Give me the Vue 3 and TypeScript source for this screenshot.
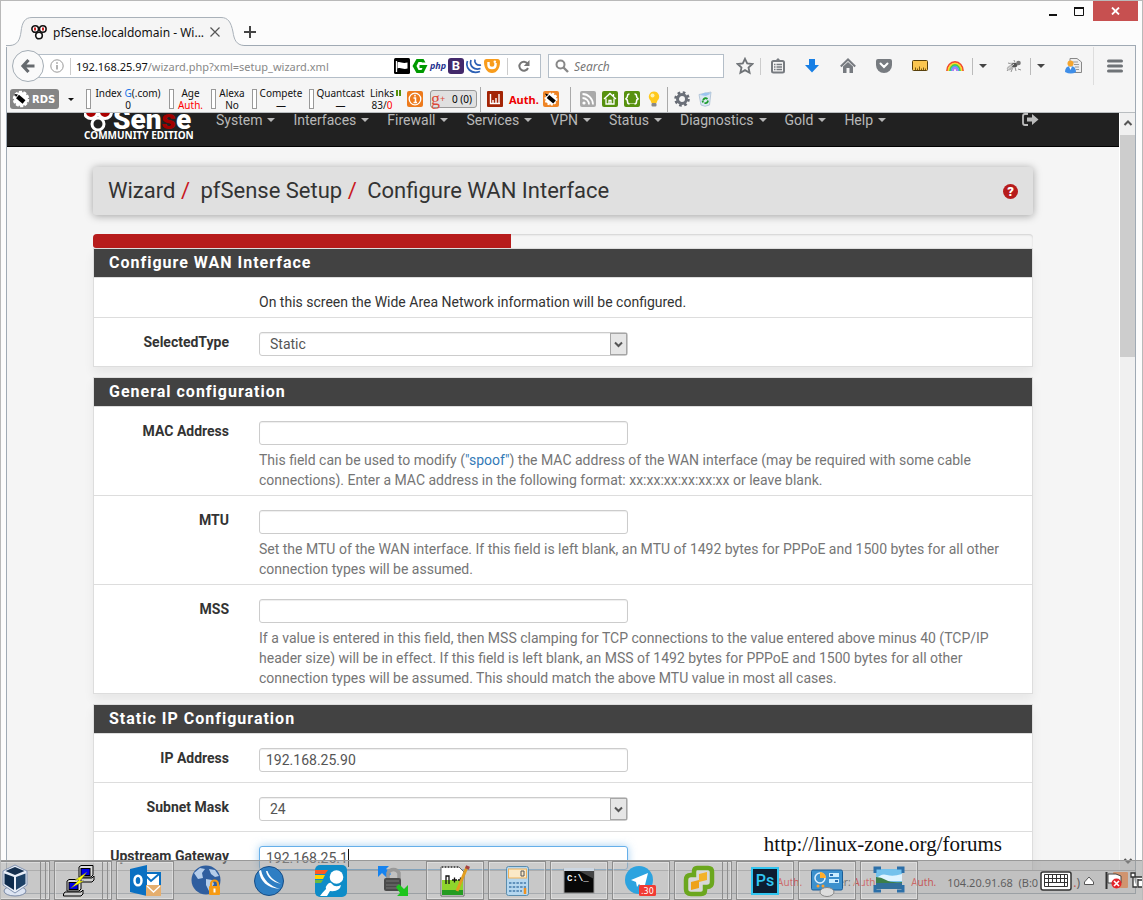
<script setup lang="ts">
import { ref } from 'vue'

interface Stat { title: string; value: string; red?: boolean; google?: boolean; cls: string }

const menu: string[] = ['System', 'Interfaces', 'Firewall', 'Services', 'VPN', 'Status', 'Diagnostics', 'Gold', 'Help']

const stats: Stat[] = [
  { title: 'Index', value: '0', google: true, cls: 'w-index' },
  { title: 'Age', value: 'Auth.', red: true, cls: 'w-age' },
  { title: 'Alexa', value: 'No', cls: 'w-alexa' },
  { title: 'Compete', value: '—', cls: 'w-compete' },
  { title: 'Quantcast', value: '—', cls: 'w-quant' },
]

const search = ref('')
const selectedType = ref('Static')
const mac = ref('')
const mtu = ref('')
const mss = ref('')
const ip = ref('192.168.25.90')
const mask = ref('24')
const gateway = ref('192.168.25.1')
const progress = ref(44.44)
</script>

<template>
  <div class="desktop">
    <header class="titlebar">
      <div class="tab">
        <svg class="tab-shape" width="238" height="30" viewBox="0 0 238 30" aria-hidden="true">
          <path d="M0 28.500H4C12 28 14 22 15 15C16 5 19 .5 26 .5H215C222 .5 225 5 227 15C228 22 230 28 238 28.500V30H0Z" fill="#f5f5f5" />
          <path d="M0 28.500H4C12 28 14 22 15 15C16 5 19 .5 26 .5H215C222 .5 225 5 227 15C228 22 230 28 238 28.500" fill="none" stroke="#a9b1b9" />
        </svg>
        <svg class="favicon" width="16" height="16" viewBox="0 0 16 16" aria-hidden="true">
          <g fill="#fff" stroke="#111" stroke-width="1.600"><circle cx="4.200" cy="5" r="3.300" /><circle cx="11.800" cy="5" r="3.300" /><circle cx="8" cy="11.500" r="3.300" /></g>
          <path d="M4 3.500V6.500M12 3.500V6.500" stroke="#c22" stroke-width="2" />
        </svg>
        <span class="tab-title">pfSense.localdomain - Wi...</span>
        <button class="plain" aria-label="Close tab">
          <svg width="12" height="12" viewBox="0 0 12 12"><path d="M1.500 1.500L10.500 10.500M10.500 1.500L1.500 10.500" stroke="#555" stroke-width="1.200" /></svg>
        </button>
      </div>
      <button class="plain newtab" aria-label="New tab">
        <svg width="12" height="12" viewBox="0 0 12 12"><path d="M6 0V12M0 6H12" stroke="#444" stroke-width="2" /></svg>
      </button>
      <div class="winctl">
        <button class="plain wbtn" aria-label="Minimize"><svg width="10" height="10"><rect x="1" y="7" width="8" height="2" fill="#111" /></svg></button>
        <button class="plain wbtn" aria-label="Maximize"><svg width="11" height="10"><path d="M.5 1V8.500H9.500V1" fill="none" stroke="#111" /><rect y="0" width="10" height="2" fill="#111" /></svg></button>
        <button class="plain wclose" aria-label="Close"><svg width="9" height="8" viewBox="0 0 9 8"><path d="M1 .5L8 7.500M8 .5L1 7.500" stroke="#fff" stroke-width="1.800" /></svg></button>
      </div>
    </header>

    <div class="frame">
      <div class="navbar">
        <button class="plain back" aria-label="Back">
          <svg width="16" height="16" viewBox="0 0 16 16"><path d="M8.500 2L3 8L8.500 14M3.500 8H14.500" fill="none" stroke="#666a6e" stroke-width="3.200" /></svg>
        </button>
        <div class="urlbox">
          <svg width="14" height="14" viewBox="0 0 14 14" aria-hidden="true"><circle cx="7" cy="7" r="6.200" fill="none" stroke="#999" /><path d="M7 6V10.500M7 3.200V4.700" stroke="#999" stroke-width="1.500" /></svg>
          <i class="sep info-sep"></i>
          <a href="#" class="url"><b>192.168.25.97</b>/wizard.php?xml=setup_wizard.xml</a>
          <div class="url-icons">
            <svg width="16" height="16" viewBox="0 0 16 16"><rect width="16" height="16" rx="1.500" fill="#000" /><path d="M2.500 3V14" stroke="#fff" stroke-width="1.300" /><path d="M3.500 4.500C6 3 8 6 13.500 4.500V10.500C9 12 7 9 3.500 10.500Z" fill="#fff" /></svg>
            <svg width="16" height="16" viewBox="0 0 16 16"><path d="M4.500 1H11.500L13.500 4.500H10L9.500 4H6.500L4.500 8L6.500 12H9.500L10.500 10H7.500V7H15.500L11.500 15H4.500L.5 8Z" fill="#090" /></svg>
            <span class="php">php</span>
            <span class="bs">B</span>
            <svg width="16" height="16" viewBox="0 0 16 16"><g fill="none" stroke="#2a5fb4" stroke-width="1.700"><path d="M1.500 3C-1 10 5 16.500 14 13.500" /><path d="M5 2C3 8 8 12.500 14.500 10.500" /><path d="M9 1.500C8 5 11 8 15 7" /></g></svg>
            <svg width="16" height="16" viewBox="0 0 16 16"><path d="M2.500 1H13.500Q16 1 16 4C16 10 13 15 8 15S0 10 0 4Q0 1 2.500 1Z" fill="#f89c1c" /><path d="M4.500 4V7C4.500 11 11.500 11 11.500 7V5" fill="none" stroke="#fff" stroke-width="2.400" /><circle cx="10.800" cy="3.800" r="1.300" fill="#fff" /></svg>
          </div>
          <i class="sep"></i>
          <button class="plain reload" aria-label="Reload">
            <svg width="14" height="14" viewBox="0 0 14 14"><path d="M10.500 4.500A4.500 4.500 0 1 0 11 9" fill="none" stroke="#777" stroke-width="2" /><path d="M12.500 1V7H6.800Z" fill="#777" /></svg>
          </button>
        </div>
        <label class="searchbox">
          <svg width="14" height="14" viewBox="0 0 14 14" aria-hidden="true"><circle cx="5.500" cy="5.500" r="4" fill="none" stroke="#888" stroke-width="2" /><path d="M8.500 8.500L13 13" stroke="#888" stroke-width="2.400" /></svg>
          <input v-model="search" type="search" placeholder="Search" aria-label="Search" />
        </label>
        <div class="tools">
          <button class="plain t-star" aria-label="Bookmark"><svg width="18" height="18" viewBox="0 0 18 18"><path d="M9 1.800L11.200 6.500L16.300 7L12.500 10.500L13.600 15.800L9 13.100L4.400 15.800L5.500 10.500L1.700 7L6.800 6.500Z" fill="none" stroke="#6f7377" stroke-width="1.800" /></svg></button>
          <button class="plain t-clip" aria-label="Bookmarks list"><svg width="14" height="16" viewBox="0 0 14 16"><rect x="1" y="3" width="12" height="11.500" rx="1.500" fill="none" stroke="#777b80" stroke-width="2" /><path d="M4 3L7 0L10 3Z" fill="#777b80" /><path d="M3 6.500H4.500M5.500 6.500H11M3 9H4.500M5.500 9H11M3 11.500H4.500M5.500 11.500H11" stroke="#777b80" stroke-width="1.400" /></svg></button>
          <button class="plain t36" aria-label="Downloads"><svg width="14" height="16" viewBox="0 0 14 16"><path d="M4 1H10V7H14L7 14.500L0 7H4Z" fill="#177fe5" /></svg></button>
          <button class="plain t36" aria-label="Home"><svg width="16" height="16" viewBox="0 0 16 16"><path d="M.8 8.500L8 1.500L15.200 8.500" fill="none" stroke="#777b80" stroke-width="2" /><path d="M3 8.500L8 4L13 8.500V15H9.500V10H6.500V15H3Z" fill="#777b80" /></svg></button>
          <button class="plain t36" aria-label="Pocket"><svg width="16" height="16" viewBox="0 0 16 16"><path d="M2 1H14Q16 1 16 3V7A8 8 0 0 1 0 7V3Q0 1 2 1Z" fill="#777b80" /><path d="M4.500 5.500L8 9L11.500 5.500" fill="none" stroke="#fff" stroke-width="2" stroke-linecap="round" /></svg></button>
          <button class="plain t36" aria-label="Ruler"><svg width="16" height="14" viewBox="0 0 16 14"><rect x=".5" y="1.500" width="15" height="10" rx="1" fill="#fbc650" stroke="#58400c" /><path d="M3.500 11V8.500M5.500 11V9.500M7.500 11V7.500M9.500 11V9.500M11.500 11V8.500M13.500 11V9.500" stroke="#7a5a14" /></svg></button>
          <button class="plain t-rain" aria-label="Colours"><svg width="18" height="12" viewBox="0 0 18 12"><g fill="none" stroke-width="1.800"><path d="M1 11A8 9 0 0 1 17 11" stroke="#f0472f" /><path d="M2.500 11A6.500 7.500 0 0 1 15.500 11" stroke="#ffd92e" /><path d="M4 11A5 6 0 0 1 14 11" stroke="#45cf40" /><path d="M5.500 11A3.500 4.500 0 0 1 12.500 11" stroke="#4aa6f7" /><path d="M7 11A2 3 0 0 1 11 11" stroke="#b57af0" /></g></svg></button>
          <button class="plain t-drop" aria-label="Colour options"><i class="caret dark"></i></button>
          <button class="plain t-fly" aria-label="Firebug"><svg width="16" height="14" viewBox="0 0 16 14"><path d="M1 12L4 8M5 13L7 8M10 12L9 8M2 4L6 5M8 1L9 4M12 10L15 11" stroke="#777" stroke-width=".8" /><ellipse cx="4.500" cy="8.500" rx="4" ry="2.200" transform="rotate(-30 4.500 8.500)" fill="#b5b5b5" /><ellipse cx="8.500" cy="6" rx="3" ry="2.200" fill="#555" /><circle cx="12.500" cy="4" r="2.300" fill="#777" /><path d="M2 10L8 5M4 4L10 3" stroke="#ddd" /></svg></button>
          <button class="plain t-drop" aria-label="Firebug options"><i class="caret dark"></i></button>
          <button class="plain t36 t-person" aria-label="Profile"><svg width="17" height="16" viewBox="0 0 17 16"><path d="M5 .5H12L16.500 4V14.500H5Z" fill="#eee" stroke="#888" /><path d="M8 4H13M9 6.500H14M10 9H14M11 11.500H14" stroke="#999" /><path d="M0 14Q0 8 5.500 8T11 14Q6 17 0 14Z" fill="#3f8ee8" /><path d="M4 8.500L5.500 12L7 8.500Z" fill="#fff" /><circle cx="5.500" cy="5.500" r="3" fill="#f5a52e" /></svg></button>
          <button class="plain t-menu" aria-label="Menu"><svg width="16" height="14" viewBox="0 0 16 14"><path d="M1.500 2H14.500M1.500 7H14.500M1.500 12H14.500" stroke="#6f7377" stroke-width="3" stroke-linecap="round" /></svg></button>
        </div>
      </div>

      <div class="rdsbar">
        <button class="rds">
          <svg width="18" height="18" viewBox="0 0 18 18" aria-hidden="true"><circle cx="9" cy="9" r="7" fill="#fff" stroke="#fff" stroke-width="2.500" stroke-dasharray="3 1.400" /><path d="M5.500 6.500L12 12" stroke="#000" stroke-width="4.500" /><path d="M2.500 4L6 4.500L4 7Z" /></svg>
          <span>RDS</span>
        </button>
        <i class="caret small"></i>
        <div class="stats">
          <div v-for="s in stats" :key="s.title" class="stat" :class="s.cls">
            <i class="gauge"></i>
            <div class="stat-text">
              <span>{{ s.title }}<template v-if="s.google">&nbsp;<em>G</em>(.com)</template></span>
              <span :class="{ red: s.red }">{{ s.value }}</span>
            </div>
          </div>
          <div class="stat w-links">
            <div class="stat-text"><span>Links</span><span>83/<span class="red">0</span></span></div>
            <i class="bars"></i>
          </div>
        </div>
        <svg class="i-info" width="16" height="16" viewBox="0 0 16 16"><rect width="16" height="16" rx="2" fill="#ed7a1c" /><circle cx="8" cy="8" r="5.800" fill="none" stroke="#fff" stroke-width="1.300" /><path d="M6.500 7H8.500V11.500M6.500 11.500H10M8 3.800V5.500" fill="none" stroke="#fff" stroke-width="1.500" /></svg>
        <button class="gplus"><b>g</b><sup>+</sup><span>0 (0)</span></button>
        <i class="vsep"></i>
        <svg class="i-chart" width="16" height="16" viewBox="0 0 16 16"><rect width="16" height="16" rx="1" fill="#a32405" /><path d="M3.500 3V12.500H13M6 12V9M9 12V7M12 12V3" fill="none" stroke="#fff" stroke-width="1.400" /></svg>
        <b class="auth">Auth.</b>
        <svg width="16" height="16" viewBox="0 0 16 16"><rect width="16" height="16" rx="2" fill="#ee8425" /><circle cx="8" cy="8" r="5.500" fill="#fff" stroke="#fff" stroke-width="2" stroke-dasharray="2 1.300" /><path d="M5 5.500L11.500 11" stroke="#000" stroke-width="4" /><path d="M2 2.500L5.500 3.500L3.500 5.500Z" /></svg>
        <i class="vsep s2"></i>
        <div class="minis">
          <svg width="16" height="16" viewBox="0 0 16 16"><rect width="16" height="16" rx="2" fill="#aaa" /><circle cx="4" cy="12" r="1.600" fill="#fff" /><path d="M2.500 7A6.500 6.500 0 0 1 9 13.500M2.500 3A10.500 10.500 0 0 1 13 13.500" fill="none" stroke="#fff" stroke-width="1.800" /></svg>
          <svg width="16" height="16" viewBox="0 0 16 16"><rect width="16" height="16" rx="2" fill="#57910f" /><path d="M2 8L8 2.500L14 8M4 7.500V13H12V7.500M7 13V9.500H9V13M11.500 3V5" fill="none" stroke="#fff" stroke-width="1.300" /></svg>
          <svg width="16" height="16" viewBox="0 0 16 16"><rect width="16" height="16" rx="2" fill="#57910f" /><path d="M5.500 3Q3.500 3 3.500 5T1.500 8Q3.500 8 3.500 10.500T5.500 13M10.500 3Q12.500 3 12.500 5T14.500 8Q12.500 8 12.500 10.500T10.500 13" fill="none" stroke="#fff" stroke-width="1.500" /><path d="M5.500 12.500H10.500" stroke="#fff" stroke-dasharray="1 1" /></svg>
          <svg width="16" height="16" viewBox="0 0 16 16"><path d="M8 .5A5.200 5.200 0 0 1 11.500 9.500L10.500 12H5.500L4.500 9.500A5.200 5.200 0 0 1 8 .5Z" fill="#ffc91c" /><circle cx="6.500" cy="4.500" r="2" fill="#fff3b0" /><rect x="5.500" y="12" width="5" height="3.500" rx="1" fill="#888" /></svg>
        </div>
        <i class="vsep s3"></i>
        <svg class="i-gear" width="16" height="16" viewBox="0 0 16 16"><circle cx="8" cy="8" r="6.500" fill="none" stroke="#666b74" stroke-width="2.600" stroke-dasharray="2.600 2.500" /><circle cx="8" cy="8" r="4.500" fill="none" stroke="#6b7079" stroke-width="3" /></svg>
        <svg class="i-bin" width="16" height="16" viewBox="0 0 16 16"><path d="M2 3.500L14 1L12.500 14Q8 16.500 4 14Z" fill="#dbe8f4" stroke="#a8bdd2" stroke-width=".8" /><path d="M3 4L8 1.500L14 2.500L9 5Z" fill="#9cc5ef" /><path d="M6 9Q8 6 10.500 8M11 9.500Q10.500 12.500 7.500 12M6 11.500L5.500 9.500" fill="none" stroke="#1d9c2c" stroke-width="1.800" /></svg>
      </div>

      <div class="viewport">
        <main class="page">
          <nav class="pfnav">
            <div class="pfnav-in">
              <svg class="logo" width="110" height="28" viewBox="0 0 110 28" role="img" aria-label="pfSense Community Edition">
                <g fill="#212121" stroke="#fff" stroke-width="3"><circle cx="7" cy="-1" r="6.500" fill="#a00" /><circle cx="21" cy="-1" r="6.500" fill="#a00" /><circle cx="14" cy="11" r="6" /></g>
                <text x="29" y="16" class="lg">Sen<tspan fill="#a00000">s</tspan>e</text>
                <text x="0" y="26" class="sm">COMMUNITY EDITION</text>
              </svg>
              <ul>
                <li v-for="m in menu" :key="m"><a href="#">{{ m }}<i class="caret"></i></a></li>
              </ul>
              <a href="#" class="logout" aria-label="Logout"><svg width="17" height="14" viewBox="0 0 17 14"><path d="M6 1H3Q1 1 1 3V10Q1 12 3 12H6" fill="none" stroke="#bbb" stroke-width="1.800" /><path d="M5 4.500H10V1L16.500 6.500L10 12V8.500H5Z" fill="#bbb" /></svg></a>
            </div>
          </nav>

          <div class="container">
            <header class="crumbs">
              <h1>Wizard <i>/</i> <span>pfSense Setup <i>/</i></span> <span>Configure WAN Interface</span></h1>
              <button class="help" aria-label="Help">?</button>
            </header>
            <div class="progress" role="progressbar" :aria-valuenow="progress"><div class="fill" :style="{ width: progress + '%' }"></div></div>

            <section class="panel">
              <h2>Configure WAN Interface</h2>
              <div class="row"><span></span><p>On this screen the Wide Area Network information will be configured.</p></div>
              <div class="row">
                <label for="type">SelectedType</label>
                <div class="cell"><div class="selwrap"><select id="type" v-model="selectedType"><option>Static</option><option>DHCP</option></select><svg class="selbtn" width="17" height="22" viewBox="0 0 17 22"><rect x=".5" y=".5" width="16" height="21" fill="#e6e6e6" stroke="#a6a6a6" /><path d="M5 9.500L8.500 13L12 9.500" fill="none" stroke="#555" stroke-width="2" /></svg></div></div>
              </div>
            </section>

            <section class="panel">
              <h2>General configuration</h2>
              <div class="row">
                <label for="mac">MAC Address</label>
                <div class="cell"><input id="mac" v-model="mac" type="text" class="field" />
                  <p class="hint">This field can be used to modify (<a href="#">"spoof"</a>) the MAC address of the WAN interface (may be required with some cable connections). Enter a MAC address in the following format: xx:xx:xx:xx:xx:xx or leave blank.</p></div>
              </div>
              <div class="row">
                <label for="mtu">MTU</label>
                <div class="cell"><input id="mtu" v-model="mtu" type="text" class="field" />
                  <p class="hint">Set the MTU of the WAN interface. If this field is left blank, an MTU of 1492 bytes for PPPoE and 1500 bytes for all other connection types will be assumed.</p></div>
              </div>
              <div class="row">
                <label for="mss">MSS</label>
                <div class="cell"><input id="mss" v-model="mss" type="text" class="field" />
                  <p class="hint">If a value is entered in this field, then MSS clamping for TCP connections to the value entered above minus 40 (TCP/IP header size) will be in effect. If this field is left blank, an MSS of 1492 bytes for PPPoE and 1500 bytes for all other connection types will be assumed. This should match the above MTU value in most all cases.</p></div>
              </div>
            </section>

            <section class="panel">
              <h2>Static IP Configuration</h2>
              <div class="row"><label for="ip">IP Address</label><div class="cell"><input id="ip" v-model="ip" type="text" class="field" /></div></div>
              <div class="row">
                <label for="mask">Subnet Mask</label>
                <div class="cell"><div class="selwrap"><select id="mask" v-model="mask"><option>24</option><option>32</option></select><svg class="selbtn" width="17" height="22" viewBox="0 0 17 22"><rect x=".5" y=".5" width="16" height="21" fill="#e6e6e6" stroke="#a6a6a6" /><path d="M5 9.500L8.500 13L12 9.500" fill="none" stroke="#555" stroke-width="2" /></svg></div></div>
              </div>
              <div class="row"><label for="gw">Upstream Gateway</label><div class="cell gw"><input id="gw" v-model="gateway" type="text" class="field active" /><i class="cursor"></i></div></div>
            </section>
          </div>
        </main>
        <div class="scrollbar" aria-hidden="true">
          <svg width="16" height="22" viewBox="0 0 16 22"><path d="M4.500 12L8 8.500L11.500 12" fill="none" stroke="#555" stroke-width="2" /></svg>
          <div class="thumb"></div>
          <svg class="down" width="16" height="16" viewBox="0 0 16 16"><path d="M4.500 5L8 8.500L11.500 5" fill="none" stroke="#555" stroke-width="2" /></svg>
        </div>
      </div>
      <footer class="status">
        <span class="red a1">Auth.</span><span class="a2">er: <span class="red">Auth.</span></span><span class="red a3">Auth.</span><span class="ipaddr">104.20.91.68&nbsp; (B:0</span><span class="paren"><span class="red">.</span>)</span>
      </footer>
    </div>

    <div class="watermark">http://linux-zone.org/forums</div>

    <div class="taskbar">
      <button class="task first stack" aria-label="VirtualBox"><svg width="32" height="34" viewBox="0 0 32 34"><ellipse cx="16" cy="27" rx="11" ry="5" fill="#dce4f2" stroke="#7b8ba8" /><path d="M4 7L16 1L28 7V21L16 29L4 21Z" fill="#e8eef8" stroke="#8394b2" /><path d="M6.500 7L16 3L25.500 7L16 11Z" fill="#15304f" /><path d="M5.500 9.500L15 13V26L5.500 20Z" fill="#0d2b4c" /><path d="M26.500 9.500L17 13V26L26.500 20Z" fill="#1d4166" /></svg></button>
      <button class="task stack" aria-label="PuTTY"><svg width="32" height="32" viewBox="0 0 32 32"><g stroke="#000"><path d="M16 13H29L31 11V15L29 17H14V15Z" fill="#ccc" /><path d="M16 2L18 .5H30V10L28 12H16Z" fill="#ddd" /><path d="M2 27H18L20 25V29L18 31H.5V29Z" fill="#ccc" /><path d="M4 16L6 14.500H18V24L16 26H4Z" fill="#ddd" /><rect x="18" y="3.500" width="9" height="7" fill="#0000e8" /><rect x="6" y="17.500" width="9" height="7" fill="#0000e8" /></g><path d="M24 7L12 15H16L8 23L21 16H17Z" fill="#ff0" stroke="#555" stroke-width=".5" /></svg></button>
      <button class="task" aria-label="Outlook"><svg width="32" height="32" viewBox="0 0 32 32"><path d="M14 8H31V24H14Z" fill="#fff" stroke="#0a70c2" stroke-width="2" /><path d="M15 9L22 16L30 9" fill="none" stroke="#0a70c2" stroke-width="2" /><path d="M1 4L18 0V31L1 27Z" fill="#0a70c2" /><ellipse cx="9" cy="15.500" rx="3.500" ry="4.800" fill="none" stroke="#fff" stroke-width="2.500" /><rect x="17" y="20" width="15" height="11" fill="#e5ae6d" /><path d="M18 21L24.500 27L31 21" fill="none" stroke="#fff" stroke-width="1.300" /></svg></button>
      <button class="task bare" aria-label="VPN client"><svg width="32" height="32" viewBox="0 0 32 32"><circle cx="15" cy="15" r="14.500" fill="#2f5e9f" /><path d="M3 8L9 3L14 4L11 8L12 13L7 14L5 11ZM15 14L21 15L23 19L18 26L15 20ZM18 4L24 5L28 11L24 12L20 9Z" fill="#b5cdea" /><path d="M20 22V19A3.500 3.500 0 0 1 27 19V22" fill="none" stroke="#f49a12" stroke-width="2.200" /><rect x="18" y="21" width="11" height="9" rx="1" fill="#f69b15" /><path d="M23.500 23.500V27.500" stroke="#fff" stroke-width="2" /></svg></button>
      <button class="task bare" aria-label="WinBox"><svg width="32" height="32" viewBox="0 0 32 32"><circle cx="16" cy="16" r="14.500" fill="#2e7ec3" stroke="#174d86" /><path d="M6 6C7 16 14 23 27 24C17 21 10 15 8 5Z" fill="#fff" /><path d="M13 6C14 12 19 17 28 19C20 15 16 11 14.500 6Z" fill="#fff" /></svg></button>
      <button class="task bare" aria-label="Mail sender"><svg width="32" height="32" viewBox="0 0 32 32"><rect width="32" height="32" rx="5" fill="#0e8cc8" /><path d="M0 5H13L10 9H0Z" fill="#ff5a23" /><path d="M0 10H10L8 14H0Z" fill="#ffd500" /><path d="M0 15H8L6 18H0Z" fill="#6db93d" /><circle cx="21.500" cy="12" r="6.800" fill="#fff" /><path d="M12 20Q15 16 17 19Q20 23 26 20Q25 27 15 26L12 31H5Q7 28 11 24Q10 22 12 20Z" fill="#fff" /></svg></button>
      <button class="task bare" aria-label="Secure transfer"><svg width="32" height="32" viewBox="0 0 32 32"><path d="M1 1H12L9 4L14 9L10 13L5 8L1 12Z" fill="#1683ef" /><path d="M11 14V8A6 6 0 0 1 22 8V14" fill="none" stroke="#999" stroke-width="3.500" /><rect x="7" y="13" width="17" height="13" rx="2" fill="#4b4b4b" /><path d="M9 16H22M9 20H22M9 23H22" stroke="#777" /><path d="M19 22L22 19L27 24L31 20V31H20L23 28Z" fill="#1dc51d" /></svg></button>
      <button class="task" aria-label="Notepad++"><svg width="32" height="32" viewBox="0 0 32 32"><path d="M2 2H20L25 7V31H2Z" fill="#fff" stroke="#666" /><path d="M3 15H24V30H3Z" fill="#8fd52c" /><path d="M3 25H24V30H3Z" fill="#259c22" /><path d="M3 2H20" stroke="#555" stroke-width="2" stroke-dasharray="1 2" /><path d="M7 19V11H10V19M13 15H18M15.500 12.500V17.500M19 15H24M21.500 12.500V17.500" fill="none" stroke="#111" stroke-width="1.300" /><path d="M28 2L18 26" stroke="#e19d20" stroke-width="3" /><path d="M29 1L28 4" stroke="#a54243" stroke-width="4" /></svg></button>
      <button class="task" aria-label="Calculator"><svg width="32" height="32" viewBox="0 0 32 32"><rect x="5.500" y="1.500" width="22" height="29" rx="2" fill="#b5d7ef" stroke="#5b8dad" /><rect x="7.500" y="4" width="18" height="9" fill="#fbe9c7" stroke="#efb25b" /><path d="M20 6H23V11H20Z" fill="none" stroke="#555" /><g stroke="#5f91bb" stroke-width="2" stroke-dasharray="2.500 1.200"><path d="M8 18H25M8 22H25M8 26H21" /></g><path d="M24 23V29" stroke="#f0911e" stroke-width="2.500" /></svg></button>
      <button class="task" aria-label="Command Prompt"><svg width="32" height="30" viewBox="0 0 32 30"><rect x="1" y="3" width="30" height="24" fill="#080808" stroke="#999" /><rect x="1" y="2" width="30" height="3" fill="#ccd6e1" /><path d="M16 5L31 5V13Z" fill="#444" /><text x="4" y="15" class="cmd">C:\_</text></svg></button>
      <button class="task" aria-label="Telegram"><svg width="36" height="32" viewBox="0 0 36 32"><circle cx="16" cy="15" r="14" fill="#2da3df" /><path d="M8 15L25 8L21 24L16 19L14 22L13 17Z" fill="#fff" /><rect x="16" y="20" width="17" height="11" rx="1.500" fill="#f13b34" /><text x="18" y="29" class="badge">.30</text></svg></button>
      <button class="task stack" aria-label="vSphere"><svg width="32" height="32" viewBox="0 0 32 32"><path d="M14 3H25Q29 3 29 7V17Q29 22 24 22H22V25Q22 29 18 29H8Q3 29 3 24V15Q3 10 8 10H11V7Q11 3 14 3Z" fill="#d8d8d8" stroke="#6ba71e" stroke-width="4.500" /><path d="M16 9L24 7V15L16 17Z" fill="#f3b329" /><path d="M8 17L16 15V23L8 25Z" fill="#eea21a" /></svg></button>
      <button class="task" aria-label="Photoshop"><span class="ps">Ps</span></button>
      <button class="task" aria-label="Control Panel"><svg width="34" height="32" viewBox="0 0 34 32"><rect x="1.500" y="5" width="31" height="20" rx="1.500" fill="#3d91cd" stroke="#1a5d98" /><circle cx="10" cy="13" r="5" fill="none" stroke="#dcefff" stroke-width="1.500" /><path d="M10 13V7A6 6 0 0 1 16 13Z" fill="#ffae2b" /><path d="M19 10H29M19 16H29" stroke="#cdeeff" stroke-width="4" /><path d="M20 10H23M25 16H28" stroke="#2a6fb0" stroke-width="2" /><circle cx="8" cy="21" r="1.500" fill="#ff9f2b" /><circle cx="13" cy="21" r="1.500" fill="#ff9f2b" /><ellipse cx="17" cy="27" rx="7" ry="4.500" fill="#ddd" stroke="#888" /></svg></button>
      <button class="task" aria-label="Picture viewer"><svg width="32" height="32" viewBox="0 0 32 32"><rect x="3" y="4" width="26" height="20" fill="#74c1ec" /><path d="M3 14Q8 8 14 10T29 9V16H3Z" fill="#dff3ff" /><path d="M3 12Q8 12 13 15T29 17V19H3Z" fill="#3c7e49" /><rect x="3" y="18" width="26" height="6" fill="#326f9b" /><path d="M2 8V3H8M24 3H30V8M30 20V26H24M8 26H2V20" fill="none" stroke="#2c6fa8" stroke-width="3" /></svg></button>
      <div class="tray">
        <svg width="32" height="20" viewBox="0 0 32 20"><rect x="1" y="1" width="30" height="18" rx="2" fill="#fff" stroke="#333" stroke-width="1.500" /><g stroke="#333" fill="none"><path d="M4.500 3.500H27.500V15.500H4.500ZM4.500 7.500H27.500M4.500 11.500H27.500M8.500 3.500V15M12.500 3.500V11M16.500 3.500V11M20.500 3.500V11M24.500 3.500V15" /></g></svg>
        <svg class="up" width="10" height="10" viewBox="0 0 10 10"><path d="M.5 6L5 1L9.500 6V8.500H.5Z" fill="#fff" stroke="#555" /></svg>
        <svg class="flag" width="24" height="20" viewBox="0 0 24 20"><rect x="8" y="1" width="15" height="16" rx="1" fill="#d0946f" /><path d="M1.500 1V18" stroke="#333" stroke-width="2" /><path d="M3 3H11L16 5V12H3Z" fill="#fff" stroke="#444" /><circle cx="11.500" cy="12.500" r="5" fill="#e3242b" /><path d="M9 10L14 15M14 10L9 15" stroke="#fff" stroke-width="1.600" /></svg>
        <svg width="13" height="18" viewBox="0 0 13 18"><path d="M1 1H5V5H1ZM3 5V15H7M5 5H14V15H8V7M8 8H14" fill="#fff" stroke="#333" stroke-width="1.300" /></svg>
      </div>
    </div>
  </div>
</template>

<style>
html, body { height: 100%; overflow: hidden; }
</style>

<style scoped>
* { box-sizing: border-box; }
svg { display: block; flex: none; }
i { font-style: normal; }
.desktop { position: relative; height: 100vh; display: flex; flex-direction: column; overflow: hidden; padding: 0 6px 6px 5px; background: #fcfcfc; border: 1px solid #b9b9b9; border-bottom: 0; font-family: "Noto Sans", sans-serif; font-size: 12px; color: #111; }
.plain { border: 0; padding: 0; margin: 0; background: none; display: flex; align-items: center; justify-content: center; }
.titlebar { flex: none; height: 44px; display: flex; align-items: flex-start; }
.tab { position: relative; z-index: 1; width: 238px; height: 45px; padding: 17px 0 0 25px; display: flex; align-items: center; }
.tab-shape { position: absolute; left: 0; top: 16px; }
.favicon, .tab-title, .tab button { position: relative; }
.tab-title { width: 150px; margin-left: 6px; white-space: nowrap; }
.tab button { margin-left: 6px; }
.newtab { height: 28px; margin-top: 17px; }
.winctl { margin: 0 -2px 0 auto; display: flex; }
.wbtn { width: 26px; height: 21px; }
.wclose { width: 45px; height: 20px; margin-left: 1px; background: #c75050; }
.frame { flex: 1; min-height: 0; display: flex; flex-direction: column; border: 1px solid #a0aab4; background: #f5f5f5; }
.navbar { flex: none; height: 40px; display: flex; align-items: center; padding-left: 5px; }
.back { flex: none; position: relative; width: 32px; height: 32px; border: 1px solid #a4adb5; border-radius: 50%; background: #fafafa; }
.urlbox { flex: 1; height: 24px; margin-left: -6px; padding-left: 12px; display: flex; align-items: center; background: #fff; border: 1px solid #b4bec8; border-left: 0; white-space: nowrap; }
.sep { width: 1px; height: 17px; background: #ccc; }
.info-sep { margin: 0 5px 0 6px; }
.url { color: #888; text-decoration: none; font-size: 11px; }
.url b { font-weight: 400; color: #111; }
.url-icons { margin-left: auto; margin-right: 7px; display: flex; gap: 2px; align-items: center; }
.php { width: 16px; font: italic 700 9px/16px "Noto Sans", sans-serif; color: #25338f; }
.bs { width: 16px; height: 16px; border-radius: 3px; background: #43296b; color: #fff; text-align: center; font: 700 13px/16px "Roboto", sans-serif; }
.reload { width: 32px; }
.searchbox { flex: none; width: 176px; height: 24px; margin-left: 7px; padding-left: 6px; display: flex; align-items: center; gap: 5px; background: #fff; border: 1px solid #b4bec8; }
.searchbox input { width: 140px; border: 0; outline: 0; padding: 0; background: none; font: italic 12px "Noto Sans", sans-serif; }
.searchbox input::placeholder { color: #777; }
.tools { flex: none; align-self: stretch; display: flex; align-items: center; padding-left: 5px; }
.tools button { height: 17px; flex: none; }
.t-star { width: 32px; border-right: 1px solid #ccc; }
.t-clip { width: 33px; }
.t36 { width: 36px; }
.t-rain { width: 35px; border-right: 1px solid #bbb; }
.t-drop { width: 20px; }
.t-fly { width: 33px; margin-left: 5px; border-right: 1px solid #bbb; }
.t-person { margin: 0 2px 0 4px; }
.tools .t-menu { width: 42px; height: 38px; border-left: 1px solid #ddd; }
.caret { display: inline-block; border: 4px solid transparent; border-top-color: #b8b8b8; border-bottom: 0; }
.caret.dark { border-top-color: #444; }
.caret.small { border-width: 3px 3px 0; border-top-color: #111; margin: 0 12px 0 9px; }
.rdsbar { flex: none; height: 27px; display: flex; align-items: center; padding-left: 3px; border-bottom: 1px solid #b9bdc0; font-size: 10px; }
.rds { width: 49px; height: 20px; padding: 0 0 0 2px; display: flex; align-items: center; justify-content: flex-start; gap: 2px; border: 0; border-radius: 3px; background: #858585; color: #fff; font: 700 10px "DejaVu Sans", sans-serif; }
.stats { display: flex; }
.stat { display: flex; gap: 2px; align-items: center; }
.stat-text { flex: 1; min-width: 0; display: flex; flex-direction: column; align-items: center; line-height: 12px; white-space: nowrap; }
.stat em { font-style: normal; color: #1a73e8; }
.red { color: #f00; }
.gauge { flex: none; width: 5px; height: 20px; border: 1px solid #999; background: #fff; }
.w-index { width: 77px; margin-right: 6px; }
.w-age { width: 36px; margin-right: 6px; }
.w-alexa { width: 35px; margin-right: 6px; }
.w-compete { width: 51px; margin-right: 6px; }
.w-quant { width: 56px; margin-right: 5px; }
.w-links { width: 31px; }
.bars { flex: none; align-self: flex-start; width: 5px; height: 6px; margin-top: 3px; border: 2px solid #57910f; border-width: 0 2px; }
.i-info { margin-left: 6px; }
.gplus { width: 47px; height: 18px; margin-left: 7px; padding: 0 4px 0 0; display: flex; align-items: center; border: 1px solid #999; border-radius: 3px; background: #e0e0e0; font: 11px "Noto Sans", sans-serif; }
.gplus b { color: #dd4b39; font: 18px/16px "Liberation Serif", serif; }
.gplus sup { color: #dd4b39; line-height: 8px; }
.gplus span { margin-left: auto; font-size: 10px; white-space: nowrap; }
.vsep { flex: none; width: 1px; height: 25px; margin: 0 6px 0 3px; background: #aaa; }
.s2 { margin: 0 9px 0 11px; }
.s3 { margin: 0 6px 0 5px; }
.auth { margin: 0 4px 0 6px; font-size: 11px; color: #e00; }
.minis { display: flex; gap: 6px; }
.i-bin { margin-left: 7px; }
.viewport { flex: 1; min-height: 0; display: flex; background: #f5f5f5; }
.page { flex: 1; min-width: 0; overflow: hidden; font: 14px/20px "Roboto", sans-serif; color: #333; }
.pfnav { height: 34px; background: #212121; border-bottom: 1px solid #000; }
.pfnav-in { max-width: 958px; height: 33px; margin: 0 auto; display: flex; align-items: flex-start; }
.logo { margin-right: 22px; overflow: hidden; }
.lg { font: 900 28px "Roboto", sans-serif; fill: #fff; }
.sm { font: 700 10px "Noto Sans", sans-serif; fill: #fff; }
.pfnav ul { display: flex; gap: 18px; margin: 0; padding: 0; list-style: none; line-height: 14px; }
.pfnav a { display: flex; align-items: center; color: #b8b8b8; text-decoration: none; }
.pfnav li .caret { margin-left: 5px; }
.pfnav .logout { margin: 0 3px 0 auto; }
.container { max-width: 940px; margin: 0 auto; padding-top: 20px; }
.crumbs { height: 48px; padding: 0 15px; display: flex; align-items: center; justify-content: space-between; border-radius: 3px; background: #e0e0e0; box-shadow: 0 1px 8px rgba(0, 0, 0, .35); }
h1 { margin: 0; font: 400 22px/30px "Roboto", sans-serif; color: #333; }
h1 i { color: #c9171e; }
h1 span { margin-left: 5px; }
.help { width: 15px; height: 15px; padding: 0; border: 0; border-radius: 50%; background: #b71c1c; color: #fff; font: 900 13px/15px "Roboto", sans-serif; }
.progress { height: 14px; margin-top: 19px; overflow: hidden; border-radius: 4px 4px 3px 3px; background: #f5f5f5; box-shadow: inset 0 1px 2px rgba(0, 0, 0, .15); }
.fill { height: 100%; background: #b71c1c; }
.panel { margin-bottom: 10px; background: #fff; border: 1px solid #ddd; box-shadow: 0 6px 10px rgba(0, 0, 0, .06); }
h2 { margin: 0; padding: 0 15px; background: #424242; border-bottom: 1px solid #ddd; color: #fff; font: 700 16px/28px "Roboto", sans-serif; letter-spacing: 1px; }
.row { display: grid; grid-template-columns: 135px minmax(0, 1fr); column-gap: 30px; padding: 14px 15px 5px 0; border-bottom: 1px solid #ddd; }
.row:last-child { border-bottom: 0; }
.row label { text-align: right; font-weight: 700; white-space: nowrap; }
p { margin: 0; }
.hint { color: #757575; }
.hint a { color: #337ab7; text-decoration: none; }
.field, .selwrap { display: block; width: 369px; max-width: 100%; height: 24px; margin-bottom: 5px; }
.field, select { border: 1px solid #ccc; border-radius: 3px; background: #fff; box-shadow: inset 0 1px 1px rgba(0, 0, 0, .07); color: #555; font: 14px "Roboto", sans-serif; outline: 0; }
.field { padding: 0 6px; }
.selwrap { position: relative; }
select { display: block; width: 100%; height: 24px; padding: 0 24px 0 10px; appearance: none; }
.selbtn { position: absolute; right: 1px; top: 1px; pointer-events: none; }
.field.active { border-color: #66afe9; box-shadow: 0 0 8px rgba(102, 175, 233, .6); }
.gw { position: relative; }
.cursor { position: absolute; left: 89px; top: 3px; width: 1px; height: 18px; background: #111; }
.scrollbar { flex: none; width: 16px; display: flex; flex-direction: column; background: #f0f0f0; border-left: 1px solid #fff; }
.thumb { height: 222px; background: #cdcdcd; }
.down { margin-top: auto; }
.status { flex: none; height: 23px; display: flex; align-items: center; justify-content: flex-end; padding-right: 55px; border-top: 1px solid #b0b0b0; font-size: 10px; white-space: nowrap; }
.a1 { margin-right: 36px; }
.a2 { margin-right: 33px; }
.ipaddr { margin: 0 35px 0 11px; font-size: 11px; }
.paren { font-size: 12px; }
.watermark { position: absolute; right: 140px; bottom: 42px; font: 21px/28px "Liberation Serif", serif; color: #111; }
.taskbar { position: absolute; left: -1px; right: -1px; bottom: 0; height: 40px; display: flex; gap: 4px; overflow: hidden; background: rgba(152, 152, 152, .56); border-top: 1px solid #999; }
.task { flex: none; position: relative; width: 58px; height: 39px; padding: 0; display: flex; align-items: center; justify-content: center; border: 1px solid #8d8d8d; background: rgba(255, 255, 255, .12); box-shadow: inset 0 0 0 1px rgba(255, 255, 255, .35); }
.task.bare { border-color: transparent; background: none; box-shadow: none; }
.task.first { width: 50px; border-left: 0; }
.task.first svg { margin-left: -12px; }
.task.stack { padding-right: 8px; }
.task.stack::after { content: ""; position: absolute; right: 3px; top: 0; bottom: 0; width: 4px; border: 1px solid #8d8d8d; border-width: 0 1px; }
.cmd { font: 700 9px "Liberation Mono", monospace; fill: #fff; }
.badge { font: 8px "DejaVu Sans", sans-serif; fill: #fff; }
.ps { width: 28px; height: 28px; border: 2px solid #31c5f0; background: #0d1d30; color: #31c5f0; font: 500 16px/24px "Roboto", sans-serif; }
.tray { flex: none; margin-left: auto; display: flex; align-items: center; }
.up { margin: 0 11px 0 12px; }
.flag { margin-right: 1px; }
</style>
